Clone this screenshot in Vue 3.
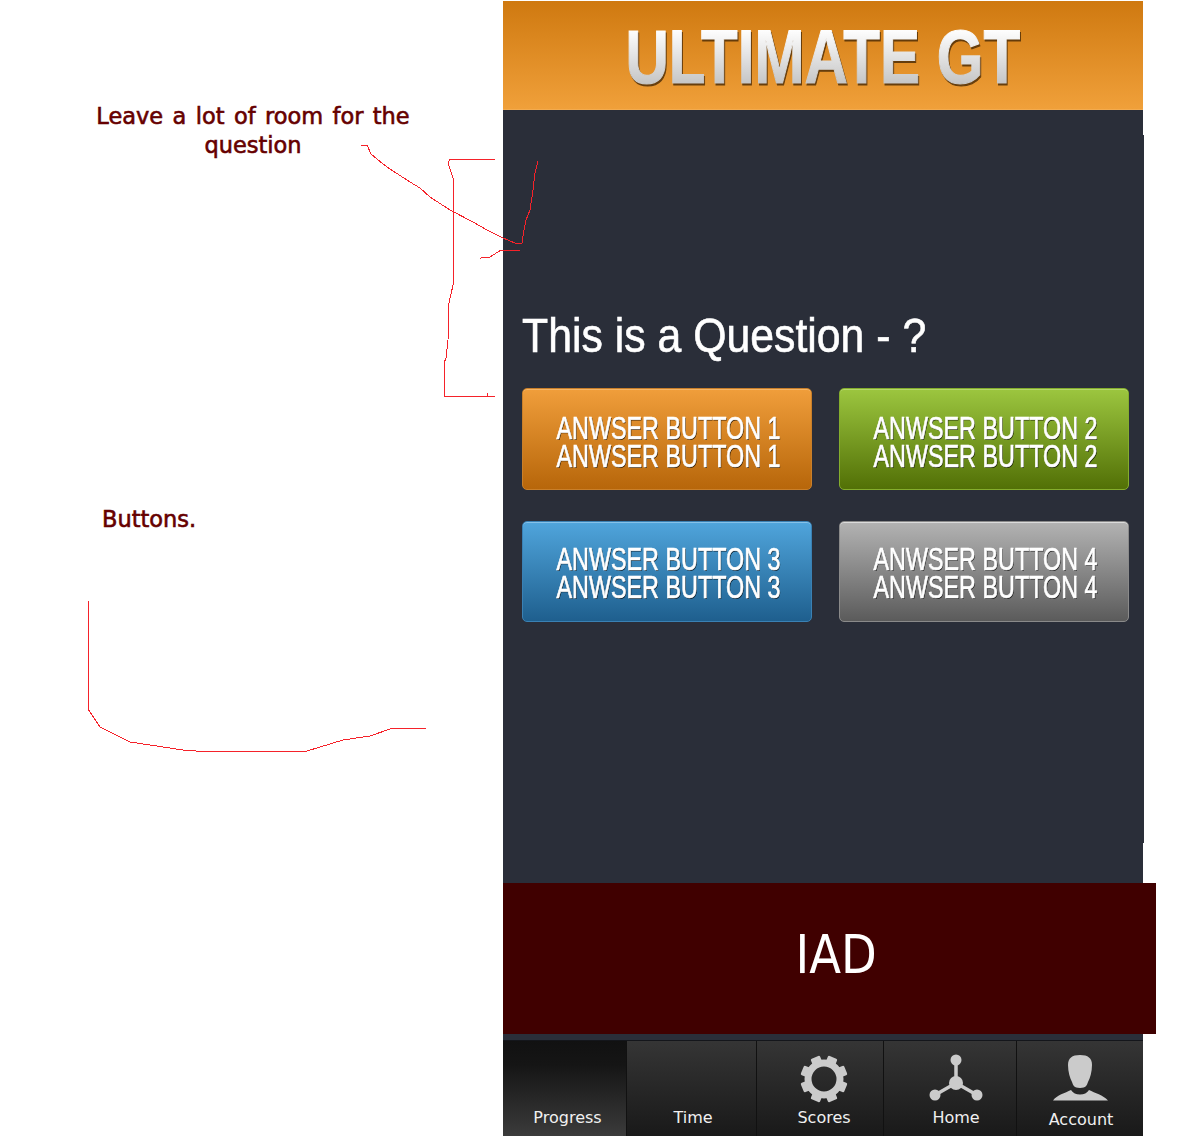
<script setup>
const buttons = [
  { id: 1, tone: 'orange', label: 'ANWSER BUTTON 1' },
  { id: 2, tone: 'green', label: 'ANWSER BUTTON 2' },
  { id: 3, tone: 'blue', label: 'ANWSER BUTTON 3' },
  { id: 4, tone: 'grey', label: 'ANWSER BUTTON 4' }
]
const tabs = [
  { label: 'Progress', cls: 'progress' },
  { label: 'Time', cls: 'time' },
  { label: 'Scores', cls: 'scores', icon: 'gear' },
  { label: 'Home', cls: 'home', icon: 'nodes' },
  { label: 'Account', cls: 'account', icon: 'person' }
]
const strokes = [
  '361,145 367,145 371,154 383,164 390,169 410,182 420,188 430,197 450,210 473,222 487,230 503,238 515,243 522,243 524,230 526,220 530,210 533,190 535,173 538,161',
  '495,159 450,159 448,163 453,178 453,285 449,303 448,340 446,358 444,363 444,396 495,396',
  '487,393 487,396',
  '520,250 501,250 490,257 482,257 480,259',
  '88,601 88,709 100,727 130,742 183,750 196,751 307,751 343,740 370,736 393,728 426,728'
]
</script>

<template>
  <div class="page">
    <aside class="notes">
      <p class="note question-note">Leave a lot of room for the<br />question</p>
      <p class="note buttons-note">Buttons.</p>
    </aside>

    <main class="phone">
      <header class="top">
        <h1 class="title"><span>ULTIMATE GT</span></h1>
      </header>

      <section class="content">
        <h2 class="question"><span>This is a Question - ?</span></h2>
        <div class="answers">
          <button v-for="b in buttons" :key="b.id" class="answer" :class="b.tone">
            <span>{{ b.label }}</span>
            <span>{{ b.label }}</span>
          </button>
        </div>
      </section>

      <div class="ad"><span>IAD</span></div>
      <div class="strip"></div>

      <nav class="tabs">
        <div v-for="t in tabs" :key="t.label" class="tab" :class="t.cls">
          <svg v-if="t.icon === 'gear'" class="icon" width="50" height="50" viewBox="0 0 50 50">
            <g fill="#cbcbcb">
              <path fill-rule="evenodd" d="M25 5.500a19.500 19.500 0 1 0 0 39a19.500 19.500 0 1 0 0-39zM25 12.500a12.500 12.500 0 1 1 0 25a12.500 12.500 0 1 1 0-25z" />
              <rect v-for="a in [22.5,67.5,112.500,157.500,202.500,247.500,292.500,337.500]" :key="a" x="20" y="1.500" width="10" height="8" rx="1.500" :transform="`rotate(${a} 25 25)`" />
            </g>
          </svg>
          <svg v-else-if="t.icon === 'nodes'" class="icon" width="56" height="50" viewBox="0 0 56 50">
            <g fill="#cbcbcb" stroke="none">
              <path d="M28 6V29M28 29L7 41M28 29L49 41" stroke="#cbcbcb" stroke-width="3.500" fill="none" />
              <circle cx="28" cy="6" r="5.500" />
              <circle cx="28" cy="29" r="7" />
              <circle cx="7" cy="41" r="5.500" />
              <circle cx="49" cy="41" r="5.500" />
            </g>
          </svg>
          <svg v-else-if="t.icon === 'person'" class="icon" width="56" height="50" viewBox="0 0 56 50">
            <g fill="#cbcbcb">
              <path d="M27 1C19 1 15 4 15 11C15 18 17 24 19 28C20 31 21 34 27 34C33 34 34 31 35 28C37 24 39 18 39 11C39 4 35 1 27 1Z" />
              <path d="M0 46.500C4 41 12 39 18 36C20 39 23 40.500 27 40.500C31 40.500 34 39 36 36C42 39 50 41 55 46.500Z" />
            </g>
          </svg>
          <span class="tab-label">{{ t.label }}</span>
        </div>
      </nav>
    </main>

    <svg class="scribbles" width="1200" height="1136" viewBox="0 0 1200 1136">
      <polyline v-for="(p, i) in strokes" :key="i" :points="p" />
    </svg>
  </div>
</template>

<style scoped>
.page {
  position: relative;
  display: flex;
  width: 1200px;
  height: 1136px;
  overflow: hidden;
  background: #fff;
}
.notes {
  width: 503px;
  flex: none;
  display: flex;
  flex-direction: column;
  font-family: "DejaVu Sans", Verdana, sans-serif;
}
.note {
  margin: 0;
  color: #660000;
  font-size: 22.5px;
  line-height: 29px;
  word-spacing: 2.2px;
  -webkit-text-stroke: 0.6px #660000;
}
.question-note {
  margin-top: 102px;
  width: 506px;
  text-align: center;
}
.buttons-note {
  margin-top: 345px;
  padding-left: 102px;
}
.phone {
  width: 640px;
  flex: none;
  display: flex;
  flex-direction: column;
  padding-top: 1px;
}
.top {
  height: 108px;
  flex: none;
  display: flex;
  justify-content: center;
  background: linear-gradient(#cf7910, #f0a03a);
  border-bottom: 1px solid #f3ab4f;
}
.title {
  margin: 0;
  filter: drop-shadow(1px 2px 0 rgba(70, 40, 5, .8));
}
.title span {
  display: block;
  padding: 21px 2px 0;
  height: 91px;
  box-sizing: border-box;
  font: bold 76px/70px "Liberation Sans", sans-serif;
  white-space: nowrap;
  color: transparent;
  -webkit-text-stroke: 1.2px transparent;
  background: linear-gradient(#fff 28px, #c2c2c2 86px);
  -webkit-background-clip: text;
  background-clip: text;
  transform: scaleX(.79);
}
.content {
  position: relative;
  height: 773px;
  flex: none;
  box-sizing: border-box;
  background: #2a2e39;
  padding: 196px 14px 0 19px;
}
.content::after {
  content: "";
  position: absolute;
  top: 25px;
  right: -1px;
  width: 1px;
  height: 708px;
  background: #2a2e39;
}
.question {
  margin: 0 0 24px;
  height: 58px;
  color: #fff;
  font: 400 49px/58px "Liberation Sans", sans-serif;
  white-space: nowrap;
  -webkit-text-stroke: 0.6px #fff;
}
.question span {
  display: inline-block;
  transform: scaleX(.873);
  transform-origin: left center;
}
.answers {
  display: grid;
  grid-template-columns: 290px 290px;
  grid-template-rows: 102px 101px;
  column-gap: 27px;
  row-gap: 31px;
}
.answer {
  display: flex;
  flex-direction: column;
  align-items: center;
  justify-content: center;
  overflow: visible;
  padding: 6px 0 0 3px;
  border-radius: 5px;
  border: 1px solid;
  color: #fff;
  font: 400 32px/28px "Liberation Sans", sans-serif;
  text-shadow: 1px 1px 0 rgba(0, 0, 0, .75);
  -webkit-text-stroke: 0.7px #fff;
  white-space: nowrap;
}
.answer span {
  display: block;
  transform: scaleX(.73);
}
.orange {
  background: linear-gradient(#f09e3b, #b7660a);
  border-color: #c97f2a;
  box-shadow: inset 0 1px 0 #f5b566;
}
.green {
  background: linear-gradient(#9cc63f, #527006);
  border-color: #84ad2d;
  box-shadow: inset 0 1px 0 #b5d86a;
}
.blue {
  background: linear-gradient(#50a5dc, #1e5f8e);
  border-color: #3a81b4;
  box-shadow: inset 0 1px 0 #86c2e9;
  padding-top: 3px;
}
.grey {
  background: linear-gradient(#b3b3b3, #5b5b5b);
  border-color: #8a8a8a;
  box-shadow: inset 0 1px 0 #dcdcdc;
  padding-top: 3px;
}
.ad {
  height: 151px;
  flex: none;
  margin-right: -13px;
  display: flex;
  align-items: center;
  justify-content: center;
  padding: 0 0 8px 13px;
  box-sizing: border-box;
  background: #400000;
  color: #fff;
  font: 400 54px/1 "DejaVu Sans", Verdana, sans-serif;
}
.ad span {
  display: block;
  transform: scaleX(.86);
}
.strip {
  height: 6px;
  flex: none;
  background: #2a2e39;
  border-bottom: 1px solid #14161b;
}
.tabs {
  flex: 1;
  display: flex;
  font-family: "DejaVu Sans", Verdana, sans-serif;
}
.tab {
  display: flex;
  flex-direction: column;
  align-items: center;
  justify-content: flex-end;
  padding-bottom: 8px;
  box-sizing: border-box;
  background: linear-gradient(#353535, #191919);
  border-right: 1px solid #111;
}
.tab-label {
  color: #f0f0f0;
  font-size: 16px;
  line-height: 20px;
}
.progress {
  width: 124px;
  padding-left: 6px;
  background: linear-gradient(#111, #151515 25%, #3b3b3b);
}
.time { width: 130px; padding-left: 3px; }
.scores { width: 127px; padding-left: 8px; }
.home { width: 133px; padding-left: 12px; }
.account { width: 126px; padding: 0 0 6px 2px; border-right: 0; }
.icon {
  display: block;
  flex: none;
  margin-bottom: 4px;
}
.account .icon { margin-bottom: 6px; }
.scribbles {
  position: absolute;
  inset: 0;
  pointer-events: none;
}
.scribbles polyline {
  fill: none;
  stroke: #f5222a;
  stroke-width: 1;
  shape-rendering: crispEdges;
}
</style>
